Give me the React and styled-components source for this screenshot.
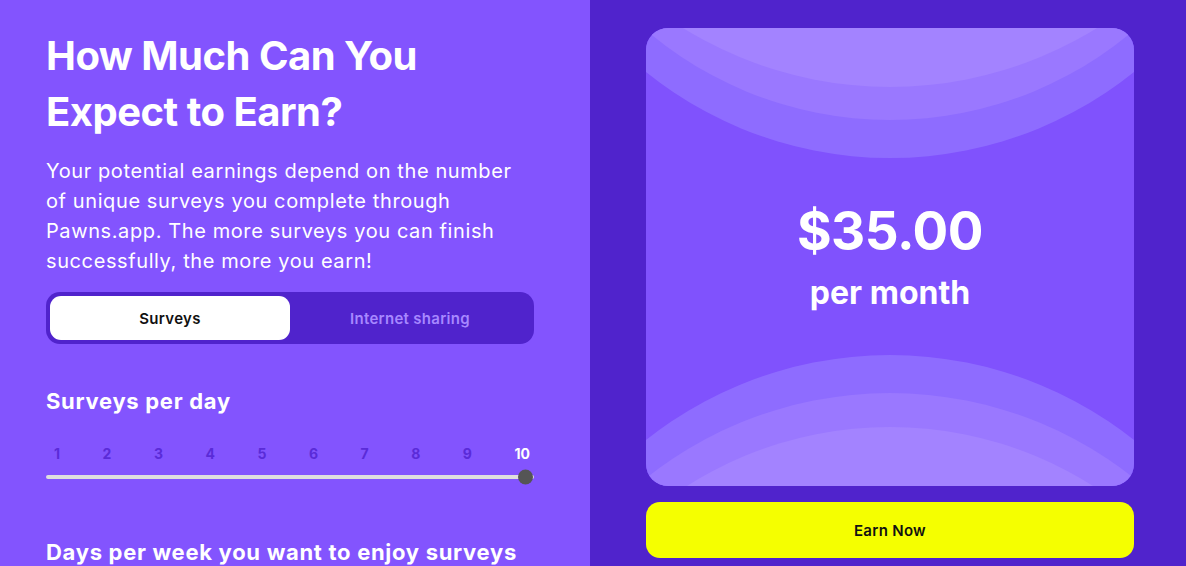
import React, { useState } from 'react';
import styled, { createGlobalStyle } from 'styled-components';

const GlobalStyle = createGlobalStyle`
  html, body {
    margin: 0;
    padding: 0;
    height: 100%;
    overflow: hidden;
  }
  body {
    font-family: "Inter", "Noto Sans", sans-serif;
  }
`;

export default function App() {
  const [tab, setTab] = useState('surveys');
  const [perDay, setPerDay] = useState(10);
  const days = [1, 2, 3, 4, 5, 6, 7, 8, 9, 10];

  return (
    <Page>
      <GlobalStyle />
      <LeftPanel>
        <Title>How Much Can You Expect to Earn?</Title>
        <Lead>
          Your potential earnings depend on the number of unique surveys you complete through
          Pawns.app. The more surveys you can finish successfully, the more you earn!
        </Lead>

        <Toggle>
          <ToggleButton active={tab === 'surveys'} onClick={() => setTab('surveys')}>Surveys</ToggleButton>
          <ToggleButton active={tab === 'sharing'} onClick={() => setTab('sharing')}>Internet sharing</ToggleButton>
        </Toggle>

        <SectionTitle>Surveys per day</SectionTitle>
        <Ticks>
          {days.map((d) => (
            <Tick key={d} active={d === perDay} onClick={() => setPerDay(d)}>{d}</Tick>
          ))}
        </Ticks>
        <Track>
          <Thumb style={{ left: `${((perDay - 1) / 9) * 100}%` }} />
        </Track>

        <SectionTitle spaced>Days per week you want to enjoy surveys</SectionTitle>
      </LeftPanel>

      <RightPanel>
        <Card>
          <Waves viewBox="0 0 488 458" preserveAspectRatio="none">
            <circle cx="244" cy="-259" r="389" fill="#8e6cff" />
            <circle cx="244" cy="-284" r="376" fill="#9a78ff" />
            <circle cx="244" cy="-334" r="393" fill="#a383ff" />
            <circle cx="244" cy="720" r="393" fill="#8e6cff" />
            <circle cx="244" cy="757" r="392" fill="#9a78ff" />
            <circle cx="244" cy="778" r="379" fill="#a383ff" />
          </Waves>
          <Amount>$35.00</Amount>
          <Period>per month</Period>
        </Card>
        <EarnButton>Earn Now</EarnButton>
      </RightPanel>
    </Page>
  );
}

const Page = styled.div`
  display: flex;
  width: 1186px;
  height: 566px;
  overflow: hidden;
`;

const LeftPanel = styled.section`
  width: 590px;
  flex-shrink: 0;
  box-sizing: border-box;
  background: #8354fe;
  padding: 28px 56px 0 46px;
  color: #fff;
`;

const Title = styled.h1`
  margin: 0;
  font-size: 40px;
  line-height: 56px;
  font-weight: 700;
  letter-spacing: -0.5px;
  width: 420px;
`;

const Lead = styled.p`
  margin: 16px 0 0;
  max-width: 505px;
  font-size: 20px;
  line-height: 30px;
  font-weight: 400;
  letter-spacing: 0.6px;
`;

const Toggle = styled.div`
  margin-top: 16px;
  display: flex;
  padding: 4px;
  background: #5023cc;
  border-radius: 14px;
  height: 52px;
  box-sizing: border-box;
`;

const ToggleButton = styled.button`
  flex: 1;
  border: none;
  border-radius: 11px;
  font-family: inherit;
  font-size: 15px;
  font-weight: 600;
  letter-spacing: 0.3px;
  cursor: pointer;
  background: ${({ active }) => (active ? '#fff' : 'transparent')};
  color: ${({ active }) => (active ? '#111' : '#a788ff')};
`;

const SectionTitle = styled.h2`
  margin: ${({ spaced }) => (spaced ? '58px' : '42px')} 0 0;
  font-size: 22px;
  line-height: 30px;
  font-weight: 700;
  letter-spacing: 0.7px;
`;

const Ticks = styled.div`
  margin-top: 29px;
  display: flex;
  justify-content: space-between;
  padding: 0 4px 0 8px;
`;

const Tick = styled.span`
  font-size: 14px;
  font-weight: 700;
  line-height: 18px;
  cursor: pointer;
  color: ${({ active }) => (active ? '#fff' : '#5a2bd8')};
`;

const Track = styled.div`
  position: relative;
  margin-top: 12px;
  height: 4px;
  border-radius: 2px;
  background: #dedede;
`;

const Thumb = styled.span`
  position: absolute;
  top: 50%;
  width: 15px;
  height: 15px;
  border-radius: 50%;
  background: #555;
  transform: translate(-16px, -50%);
`;

const RightPanel = styled.section`
  flex: 1;
  background: #5023cc;
  padding: 28px 52px 0 56px;
  display: flex;
  flex-direction: column;
  gap: 16px;
`;

const Card = styled.div`
  position: relative;
  height: 458px;
  border-radius: 22px;
  background: #8052fd;
  overflow: hidden;
  display: flex;
  flex-direction: column;
  align-items: center;
  justify-content: center;
  color: #fff;
`;

const Waves = styled.svg`
  position: absolute;
  inset: 0;
  width: 100%;
  height: 100%;
`;

const Amount = styled.div`
  position: relative;
  font-size: 53px;
  line-height: 60px;
  font-weight: 700;
  letter-spacing: -0.5px;
`;

const Period = styled.div`
  position: relative;
  font-size: 32px;
  line-height: 40px;
  font-weight: 700;
  margin-top: 12px;
`;

const EarnButton = styled.button`
  height: 56px;
  border: none;
  border-radius: 14px;
  background: #f5ff00;
  color: #111;
  font-family: inherit;
  font-size: 15px;
  font-weight: 600;
  letter-spacing: 0.3px;
  cursor: pointer;
`;
